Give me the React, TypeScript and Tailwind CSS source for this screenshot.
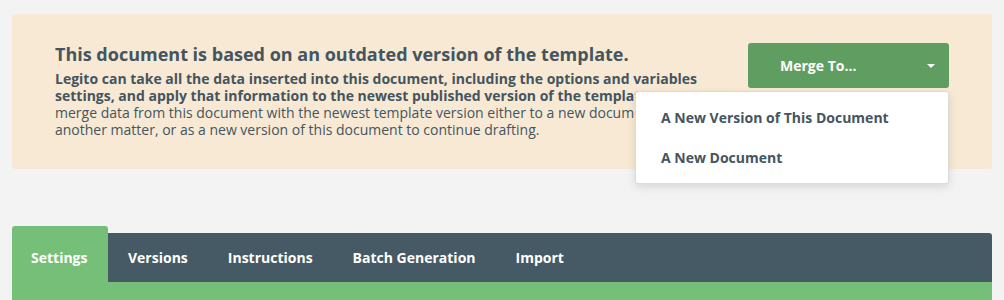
import React from "react";

export default function App() {
  const font = { fontFamily: '"Open Sans", "Noto Sans", Arial, sans-serif' };
  return (
    <div className="w-[1004px] h-[300px] bg-[#f2f3f2] overflow-hidden" style={font}>
      <div className="pt-[14px] px-[12px]">
        <div className="h-[155px] w-[980px] bg-[#f8e9d4] rounded-[3px] flex pl-[43px] pr-[43px] pt-[29px]">
          <div className="w-[666px] text-[#44555f]">
            <div className="text-[18px] font-bold leading-[24px] -mt-[1px] whitespace-nowrap">
              This document is based on an outdated version of the template.
            </div>
            <p className="text-[14px] leading-[17px] mt-[4px]">
              <b>
                Legito can take all the data inserted into this document, including the options and variables
                settings, and apply that information to the newest published version of the template.
              </b>{" "}
              You can merge data from this document with the newest template version either to a new document in
              another matter, or as a new version of this document to continue drafting.
            </p>
          </div>
          <div className="ml-auto relative">
            <button className="w-[201px] h-[45px] bg-[#5f9e60] rounded-[3px] flex items-center pl-[32px] pr-[14px] text-white text-[14px] font-bold">
              <span>Merge To...</span>
              <span className="ml-auto w-0 h-0 border-l-[4px] border-r-[4px] border-t-[4px] border-l-transparent border-r-transparent border-t-white"></span>
            </button>
            <div className="absolute right-0 top-[48px] w-[314px] h-[93px] bg-white border border-[#d9dcdd] rounded-[3px] shadow-[0_3px_8px_rgba(0,0,0,0.12)] flex flex-col pl-[25px] pt-[15px] text-[14px] font-bold text-[#44555f]">
              <div className="h-[40px] leading-[22px]">A New Version of This Document</div>
              <div className="leading-[22px]">A New Document</div>
            </div>
          </div>
        </div>
      </div>
      <div className="mt-[57px] px-[12px]">
        <div className="w-[980px] h-[56px] flex flex-col">
          <div className="flex items-end h-[56px]">
            <div className="w-full h-[49px] bg-[#465a65] rounded-tr-[3px] flex items-center text-white text-[14px] font-bold relative">
              <div className="h-[56px] -mt-[7px] bg-[#75bf78] rounded-t-[3px] px-[19px] flex items-center pt-[7px] w-[96px]">
                Settings
              </div>
              <div className="px-[20px]">Versions</div>
              <div className="px-[20px]">Instructions</div>
              <div className="px-[20px]">Batch Generation</div>
              <div className="px-[20px]">Import</div>
            </div>
          </div>
        </div>
        <div className="w-[980px] h-[18px] bg-[#75bf78]"></div>
      </div>
    </div>
  );
}
